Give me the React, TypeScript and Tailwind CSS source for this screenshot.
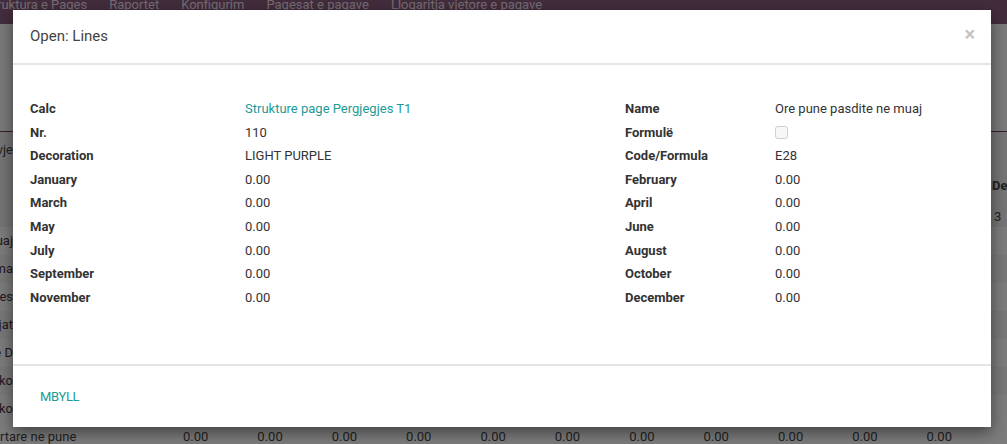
import React from 'react';

const FONT = { fontFamily: 'Roboto, "Noto Sans", Arial, sans-serif' };

const LEFT: [string, React.ReactNode][] = [
  ['Calc', <span className="text-[#1d9b97]">Strukture page Pergjegjes T1</span>],
  ['Nr.', '110'],
  ['Decoration', 'LIGHT PURPLE'],
  ['January', '0.00'],
  ['March', '0.00'],
  ['May', '0.00'],
  ['July', '0.00'],
  ['September', '0.00'],
  ['November', '0.00'],
];

const RIGHT: [string, React.ReactNode][] = [
  ['Name', 'Ore pune pasdite ne muaj'],
  ['Formulë', <span className="block w-[13px] h-[13px] rounded-[3px] border border-[#d0d0d0] bg-[#f7f7f7]" />],
  ['Code/Formula', 'E28'],
  ['February', '0.00'],
  ['April', '0.00'],
  ['June', '0.00'],
  ['August', '0.00'],
  ['October', '0.00'],
  ['December', '0.00'],
];

const BG_ROWS = ['pasdite ne muaj', 'ore te plota ne ma', 'oret totale mujore es', 'dite pushimi vjetore jat', 'pagese e D', 'ore festash jasht oko', 'ore festash ne oko'];

function Group({ rows, labelW }: { rows: [string, React.ReactNode][]; labelW: string }) {
  return (
    <div className="flex flex-col">
      {rows.map(([label, value]) => (
        <div key={label} className="flex items-center h-[23.6px]">
          <div className={`${labelW} shrink-0 font-bold text-[#333]`}>{label}</div>
          <div className="text-[#333]">{value}</div>
        </div>
      ))}
    </div>
  );
}

function Background() {
  return (
    <div className="h-[444px] overflow-hidden bg-[#f2f2f2] text-[13px]" style={FONT}>
      <div className="h-[24px] bg-[#875a7b] flex items-start overflow-hidden">
        <div className="flex gap-[22px] -mt-[5px] -ml-[15px] text-[#e9dce6] whitespace-nowrap text-[13px]">
          <span>Struktura e Pages</span>
          <span>Raportet</span>
          <span>Konfigurim</span>
          <span>Pagesat e pagave</span>
          <span>Llogaritja vjetore e pagave</span>
        </div>
      </div>
      <div className="h-[108px] bg-[#f7f7f7] border-b border-[#6a3d60]" />
      <div className="h-[95px] bg-[#ececec] flex items-start">
        <div className="w-[13px] pt-[8px] overflow-hidden flex justify-end whitespace-nowrap text-[#444]">Pagat vje</div>
        <div className="flex-1" />
        <div className="w-[16px] flex flex-col text-[#444] pt-[44px] pl-[1px]">
          <span className="font-bold whitespace-nowrap">Dec</span>
          <span className="mt-[11px] pl-[2px]">3</span>
        </div>
      </div>
      {BG_ROWS.map((r, i) => (
        <div key={r} className={`h-[28px] flex items-center ${i % 2 === 0 ? 'bg-[#fafafa]' : 'bg-[#f2f2f2]'}`}>
          <div className="w-[13px] overflow-hidden flex justify-end whitespace-nowrap text-[#4a3046]">{r}</div>
        </div>
      ))}
      <div className="h-[28px] flex items-center bg-[#fafafa] text-[#444] whitespace-nowrap">
        <div className="w-[183px] shrink-0">rtare ne pune</div>
        <div className="flex gap-[49px]">
          {Array.from({ length: 11 }).map((_, i) => (
            <span key={i}>0.00</span>
          ))}
        </div>
      </div>
    </div>
  );
}

export default function App() {
  return (
    <div className="relative w-[1007px] h-[444px] overflow-hidden" style={FONT}>
      <Background />
      <div className="absolute inset-0 bg-black/50" />
      <div className="absolute left-[13px] top-[10px] w-[978px] h-[417px] bg-white shadow-[0_5px_15px_rgba(0,0,0,0.5)] flex flex-col text-[13px]">
        <div className="h-[55px] shrink-0 border-b-2 border-[#e5e5e5] flex items-center justify-between pl-[17px] pr-[16px]">
          <div className="text-[15px] text-[#444]">Open: Lines</div>
          <div className="text-[20px] font-bold leading-none text-[#c4c4c4] -mt-[6px]">×</div>
        </div>
        <div className="flex-1 border-b-2 border-[#e5e5e5] pt-[32px] pl-[17px] flex">
          <div className="w-[595px]">
            <Group rows={LEFT} labelW="w-[215px]" />
          </div>
          <div className="flex-1">
            <Group rows={RIGHT} labelW="w-[150px]" />
          </div>
        </div>
        <div className="h-[61px] shrink-0 flex items-center pl-[27px]">
          <span className="text-[#1d9b97] uppercase tracking-tight">Mbyll</span>
        </div>
      </div>
    </div>
  );
}
